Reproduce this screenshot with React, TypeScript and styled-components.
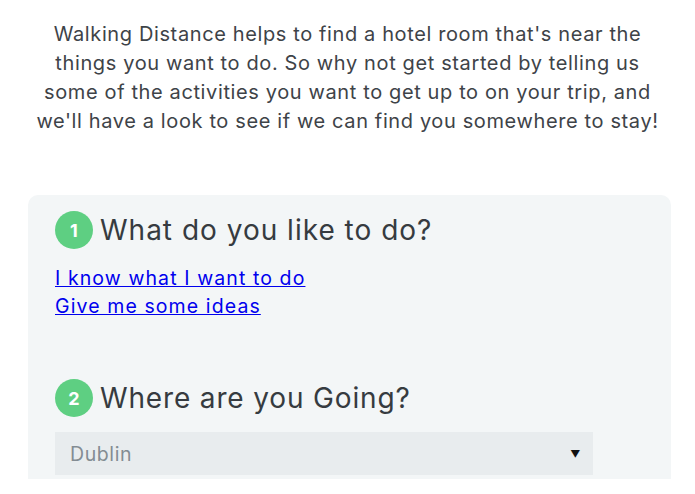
import styled, { createGlobalStyle } from "styled-components"

const Global = createGlobalStyle`
  body {
    margin: 0;
    background: #ffffff;
    font-family: Inter, "Open Sans", sans-serif;
  }
`

const App = () => {
  return (
    <Page>
      <Global />
      <Intro>
        Walking Distance helps to find a hotel room that's near the<br />
        things you want to do. So why not get started by telling us<br />
        some of the activities you want to get up to on your trip, and<br />
        we'll have a look to see if we can find you somewhere to stay!
      </Intro>
      <Panel>
        <StepTitle>
          <Badge>1</Badge>
          <Heading spacing={1}>What do you like to do?</Heading>
        </StepTitle>
        <Links>
          <Link href="#">I know what I want to do</Link>
          <Link href="#">Give me some ideas</Link>
        </Links>
        <StepTitle second>
          <Badge>2</Badge>
          <Heading spacing={0.85}>Where are you Going?</Heading>
        </StepTitle>
        <SelectBox>
          <span>Dublin</span>
          <Arrow>▼</Arrow>
        </SelectBox>
      </Panel>
    </Page>
  )
}
export default App

const Page = styled.div`
  width: 695px;
  padding-top: 20px;
`
const Intro = styled.p`
  margin: 0;
  text-align: center;
  font-size: 20px;
  letter-spacing: 0.62px;
  line-height: 29px;
  color: #3e4348;
`
const Panel = styled.div`
  margin: 59px 24px 0 28px;
  padding: 16px 27px 4px 27px;
  background-color: #f3f6f7;
  border-radius: 10px 10px 0 0;
`
const StepTitle = styled.div<{ second?: boolean }>`
  display: flex;
  align-items: center;
  gap: 7px;
  height: 38px;
  margin-top: ${({ second }) => (second ? "59px" : "0")};
`
const Badge = styled.div`
  width: 38px;
  height: 38px;
  border-radius: 50%;
  background-color: #5ecf82;
  color: #ffffff;
  display: flex;
  justify-content: center;
  align-items: center;
  font-weight: 700;
  font-size: 18px;
`
const Heading = styled.h2<{ spacing: number }>`
  margin: 0;
  font-weight: 400;
  font-size: 28px;
  letter-spacing: ${({ spacing }) => spacing}px;
  color: #363b40;
`
const Links = styled.div`
  display: flex;
  flex-direction: column;
  align-items: flex-start;
  margin-top: 15px;
`
const Link = styled.a`
  font-size: 19.5px;
  letter-spacing: 1.1px;
  line-height: 28px;
  color: #0000ee;
  text-decoration: underline;
`
const SelectBox = styled.div`
  margin-top: 15px;
  width: 538px;
  height: 43px;
  box-sizing: border-box;
  padding: 0 12px 0 15px;
  background-color: #e8ecee;
  display: flex;
  align-items: center;
  justify-content: space-between;
  font-size: 19.5px;
  letter-spacing: 0.6px;
  color: #838c93;
`
const Arrow = styled.span`
  font-size: 10px;
  color: #111111;
`
